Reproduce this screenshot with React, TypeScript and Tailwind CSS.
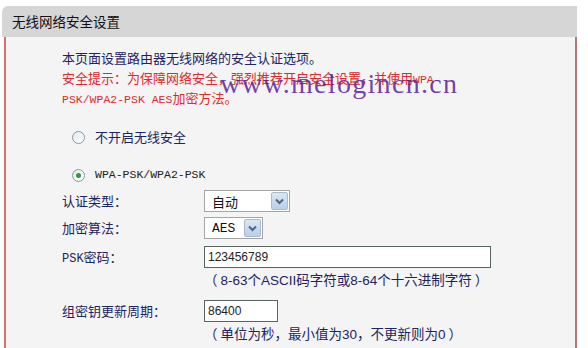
const cjk = "font-['Noto_Sans_CJK_SC',sans-serif]";
const mono = "font-['Liberation_Mono','Noto_Sans_CJK_SC',monospace]";
const hint = "font-['Liberation_Sans','Noto_Sans_CJK_SC',sans-serif]";

function Radio({ checked }: { checked?: boolean }) {
  return (
    <span className="flex h-[13px] w-[13px] items-center justify-center rounded-full border border-[#8b98a6] bg-gradient-to-br from-[#e4e8ec] to-white">
      {checked && <span className="h-[5px] w-[5px] rounded-full bg-[#2f9a3c]" />}
    </span>
  );
}

function Select({ value, width, valueClass }: { value: string; width: string; valueClass: string }) {
  return (
    <div className={`flex h-[22px] items-center justify-between border border-[#a5a5a5] bg-white pl-[7px] pr-[1px] ${width}`}>
      <span className={`text-[13px] leading-none text-[#111] ${valueClass}`}>{value}</span>
      <span className="flex h-[18px] w-[17px] items-center justify-center rounded-[2px] border border-[#a9bccf] bg-gradient-to-b from-[#dbe7f4] to-[#b9cfe6]">
        <svg width="9" height="7" viewBox="0 0 9 7">
          <path d="M1 1.5 L4.5 5 L8 1.5" fill="none" stroke="#4d6685" strokeWidth="2" />
        </svg>
      </span>
    </div>
  );
}

function Row({ label, children, className }: { label: React.ReactNode; children: React.ReactNode; className: string }) {
  return (
    <div className={`flex items-center ${className}`}>
      <div className={`w-[142px] text-[13px] leading-[20px] text-[#1c2560] ${cjk}`}>{label}</div>
      {children}
    </div>
  );
}

function Hint({ children, className }: { children: React.ReactNode; className: string }) {
  return (
    <p className={`ml-[142px] flex h-[16px] items-center text-[13.5px] leading-[16px] text-[#1c2560] ${hint} ${className}`}>
      <span className="mr-[3px]">（</span>
      {children}
      <span className="ml-[3px]">）</span>
    </p>
  );
}

export default function App() {
  return (
    <div className="relative h-[348px] w-[588px] overflow-hidden bg-white pl-[2px] pt-[6px]">
      <div className="w-[575px]">
        <div className={`flex h-[31px] items-center rounded-tl-[6px] bg-[#d6d6d6] pl-[10px] text-[13.5px] text-[#111] ${cjk}`}>
          无线网络安全设置
        </div>
        <div className="ml-[2px] h-[320px] border-l-2 border-r-2 border-l-[#d27272] border-r-[#b47676] bg-[#f4f4f4] pl-[56px] pt-[11px]">
          <div className={`text-[13px] leading-[20px] ${cjk}`}>
            <p className="h-[20px] text-[#1c2560]">本页面设置路由器无线网络的安全认证选项。</p>
            <p className="h-[20px] text-[#dc2b2e]">
              安全提示：为保障网络安全，强烈推荐开启安全设置，并使用<span className={`${mono} text-[11.5px] leading-none`}>WPA-</span>
            </p>
            <p className="h-[20px] text-[#dc2b2e]">
              <span className={`${mono} text-[11.5px] leading-none`}>PSK/WPA2-PSK AES</span>加密方法。
            </p>
          </div>

          <div className={`mt-[19px] flex h-[20px] items-center gap-[10px] pl-[10px] text-[13px] text-[#1c2560] ${cjk}`}>
            <Radio />
            <span>不开启无线安全</span>
          </div>
          <div className="mt-[18px] flex h-[20px] items-center gap-[10px] pl-[10px]">
            <Radio checked />
            <span className={`${mono} text-[11.5px] leading-none text-[#222]`}>WPA-PSK/WPA2-PSK</span>
          </div>

          <Row label="认证类型：" className="mt-[5px] h-[22px]">
            <Select value="自动" width="w-[86px]" valueClass={cjk} />
          </Row>
          <Row label="加密算法：" className="mt-[5px] h-[22px]">
            <Select value="AES" width="w-[59px]" valueClass={`${mono} text-[11.5px]`} />
          </Row>
          <Row
            label={
              <>
                <span className={`${mono} text-[12px] leading-none`}>PSK</span>密码：
              </>
            }
            className="mt-[7px] h-[22px]"
          >
            <div className="flex h-[22px] w-[287px] items-center border border-[#56665c] bg-white pl-[3px] font-['Liberation_Sans',sans-serif] text-[12px] text-[#222]">
              123456789
            </div>
          </Row>
          <Hint className="mt-[5px]">8-63个ASCII码字符或8-64个十六进制字符</Hint>
          <Row label="组密钥更新周期：" className="mt-[11px] h-[22px]">
            <div className="flex h-[22px] w-[74px] items-center border border-[#56665c] bg-white pl-[3px] font-['Liberation_Sans',sans-serif] text-[12px] text-[#222]">
              86400
            </div>
          </Row>
          <Hint className="mt-[5px]">单位为秒，最小值为30，不更新则为0</Hint>
        </div>
      </div>

      <div className="pointer-events-none absolute left-[220px] top-[68px] font-['Liberation_Serif',serif] text-[28px] leading-[32px] tracking-[1.3px] text-[#5a1f98]/85">
        www.melogincn.cn
      </div>
    </div>
  );
}
